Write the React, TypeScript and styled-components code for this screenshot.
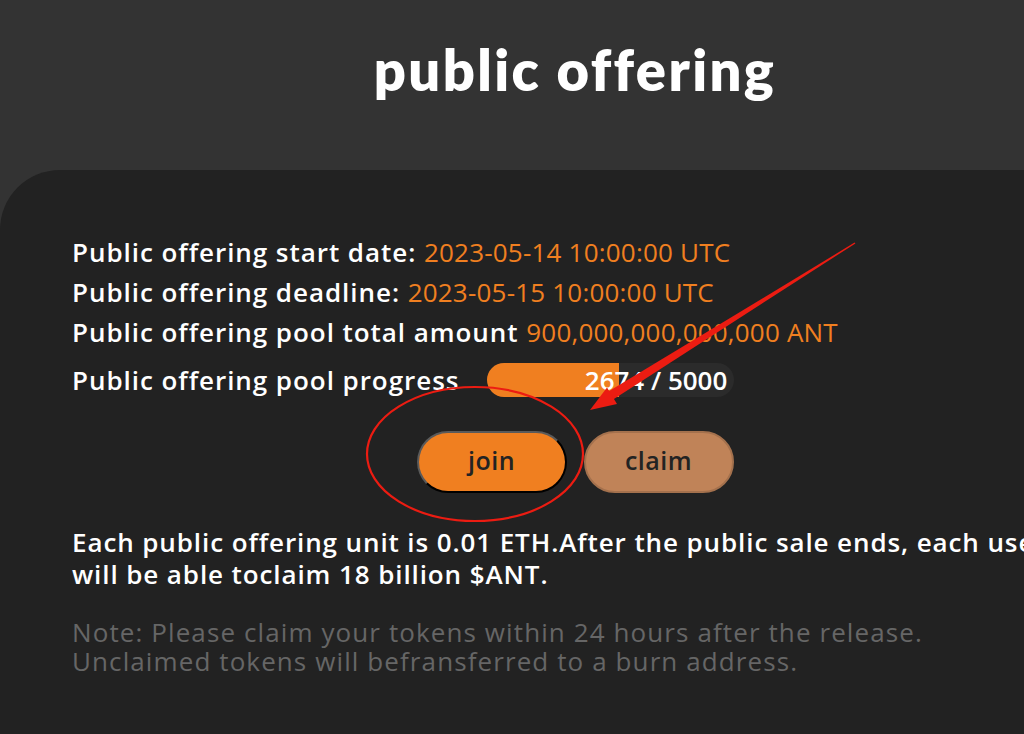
import styled, { createGlobalStyle } from 'styled-components';

const GlobalStyle = createGlobalStyle`
  html, body {
    margin: 0;
    padding: 0;
    background: #333333;
    overflow: hidden;
  }
  body {
    width: 1024px;
    height: 734px;
    font-family: "Open Sans", "Noto Sans", sans-serif;
  }
`;

const current = 2674;
const total = 5000;

function App() {
  return (
    <>
      <GlobalStyle />
      <Page>
        <Header>
          <Title>public offering</Title>
        </Header>
        <Panel>
          <InfoList>
            <InfoLine>
              Public offering start date: <Accent>2023-05-14 10:00:00 UTC</Accent>
            </InfoLine>
            <InfoLine>
              Public offering deadline: <Accent>2023-05-15 10:00:00 UTC</Accent>
            </InfoLine>
            <InfoLine>
              Public offering pool total amount <Accent>900,000,000,000,000 ANT</Accent>
            </InfoLine>
            <ProgressRow>
              <InfoLine>Public offering pool progress</InfoLine>
              <ProgressTrack>
                <ProgressFill style={{ width: `${(current / total) * 100}%` }} />
                <ProgressText>
                  {current} / {total}
                </ProgressText>
              </ProgressTrack>
            </ProgressRow>
          </InfoList>
          <ButtonRow>
            <JoinButton>join</JoinButton>
            <ClaimButton>claim</ClaimButton>
          </ButtonRow>
          <Description>
            Each public offering unit is 0.01 ETH.After the public sale ends, each user will be able
            toclaim 18 billion $ANT.
          </Description>
          <Note>
            Note: Please claim your tokens within 24 hours after the release.
            <br />
            Unclaimed tokens will befransferred to a burn address.
          </Note>
        </Panel>
      </Page>
      <Annotation width="1024" height="734" viewBox="0 0 1024 734">
        <ellipse cx="475" cy="454" rx="108" ry="67" fill="none" stroke="#ec1c12" strokeWidth="2.2" />
        <polygon points="855.4,243.4 854.6,242.6 607.6,392.1 612.4,399.9" fill="#ec1c12" />
        <polygon points="590,410 607,387.5 617,404" fill="#ec1c12" />
      </Annotation>
    </>
  );
}

export default App;

const Page = styled.div`
  width: 1150px;
  height: 734px;
  display: flex;
  flex-direction: column;
`;

const Header = styled.div`
  height: 170px;
  display: flex;
  justify-content: center;
  box-sizing: border-box;
  padding-top: 38px;
`;

const Title = styled.h1`
  margin: 0;
  color: #ffffff;
  font-family: Lato, sans-serif;
  font-weight: 800;
  font-size: 56px;
  line-height: 64px;
  letter-spacing: 2.4px;
`;

const Panel = styled.div`
  flex: 1;
  background: #222222;
  border-top-left-radius: 60px;
  padding: 62px 0 0 72px;
  box-sizing: border-box;
`;

const InfoList = styled.div`
  display: flex;
  flex-direction: column;
`;

const InfoLine = styled.div`
  color: #ffffff;
  font-weight: 600;
  font-size: 26px;
  line-height: 40px;
  letter-spacing: 0.95px;
  white-space: nowrap;
`;

const Accent = styled.span`
  color: #f07f20;
  font-weight: 400;
  letter-spacing: 0.2px;
`;

const ProgressRow = styled.div`
  display: flex;
  align-items: center;
  gap: 28px;
  margin-top: 8px;
`;

const ProgressTrack = styled.div`
  position: relative;
  width: 247px;
  height: 34px;
  border-radius: 17px;
  background: #2b2b2b;
  overflow: hidden;
  display: flex;
  align-items: center;
  justify-content: flex-end;
`;

const ProgressFill = styled.div`
  position: absolute;
  left: 0;
  top: 0;
  bottom: 0;
  background: #f07f20;
`;

const ProgressText = styled.span`
  position: relative;
  color: #ffffff;
  font-weight: 600;
  font-size: 26px;
  padding-right: 7px;
`;

const ButtonRow = styled.div`
  display: flex;
  justify-content: center;
  gap: 17px;
  margin-top: 31px;
  margin-left: -72px;
`;

const BaseButton = styled.button`
  width: 150px;
  height: 62px;
  border-radius: 31px;
  font-family: "Open Sans", sans-serif;
  font-weight: 600;
  font-size: 25px;
  letter-spacing: 0.5px;
  color: #232323;
  box-sizing: border-box;
  padding: 0 0 4px;
  cursor: pointer;
`;

const JoinButton = styled(BaseButton)`
  background: #f07f20;
  border: 2px solid;
  border-color: #5a5a5a #000000 #000000 #5a5a5a;
`;

const ClaimButton = styled(BaseButton)`
  background: #c08358;
  border: 2px solid #a4714d;
`;

const Description = styled.p`
  margin: 33px 0 0;
  width: 1010px;
  color: #ffffff;
  font-weight: 600;
  font-size: 26px;
  line-height: 32px;
  letter-spacing: 0.9px;
`;

const Note = styled.p`
  margin: 28px 0 0;
  color: #666666;
  font-weight: 400;
  font-size: 26px;
  line-height: 29px;
  letter-spacing: 1.1px;
`;

const Annotation = styled.svg`
  position: absolute;
  left: 0;
  top: 0;
  pointer-events: none;
`;
